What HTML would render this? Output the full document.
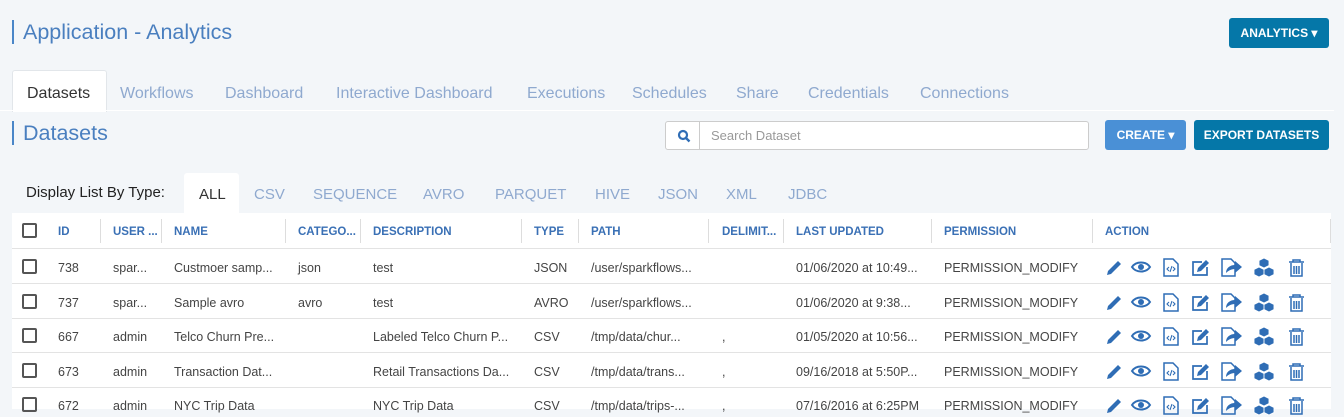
<!DOCTYPE html><html><head><style>
*{margin:0;padding:0;box-sizing:border-box}
body{width:1344px;height:409px;overflow:hidden;background:#f3f6f9;font-family:"Liberation Sans",sans-serif;position:relative;color:#444}
.a{position:absolute;white-space:nowrap}
.title{left:12px;top:20px;height:24px;border-left:2px solid #4a86c8;padding-left:9px;font-size:21.5px;color:#4a7fbf;line-height:24px}
.btn{color:#fff;font-weight:bold;font-size:12px;border-radius:3px;text-align:center}
.tab{top:85px;font-size:16px;color:#8fa9cf}
.ft{top:186px;font-size:15px;color:#8fa9cf}
.hd{font-size:11.5px;font-weight:bold;color:#3a70b5;top:226px}
.sep{width:1px;height:24px;background:#ddd;top:219px}
.cb{width:15px;height:15px;border:2px solid #555;border-radius:2px;left:22px}
.rl{left:12px;width:1319px;height:1px;background:#e3e3e3}
.c{font-size:12.5px;color:#444}
</style></head><body>
<div class="a title">Application - Analytics</div>
<div class="a btn" style="left:1229px;top:18px;width:100px;height:30px;line-height:30px;background:#0577a8">ANALYTICS ▾</div>
<div class="a" style="left:12px;top:70px;width:95px;height:42px;background:#fff;border:1px solid #e2e6ea;border-bottom:none;border-radius:3px 3px 0 0"></div>
<div class="a tab" style="left:27px;color:#333">Datasets</div>
<div class="a tab" style="left:120px">Workflows</div>
<div class="a tab" style="left:225px">Dashboard</div>
<div class="a tab" style="left:336px">Interactive Dashboard</div>
<div class="a tab" style="left:527px">Executions</div>
<div class="a tab" style="left:632px">Schedules</div>
<div class="a tab" style="left:736px">Share</div>
<div class="a tab" style="left:808px">Credentials</div>
<div class="a tab" style="left:920px">Connections</div>
<div class="a" style="left:0;top:110px;width:1334px;height:1px;background:#fff"></div>
<div class="a title" style="top:121px">Datasets</div>
<div class="a" style="left:665px;top:121px;width:424px;height:29px;background:#fff;border:1px solid #ccc;border-radius:3px"></div>
<div class="a" style="left:699px;top:122px;width:1px;height:27px;background:#ccc"></div>
<svg class="a" style="left:677px;top:129px" width="14" height="14" viewBox="0 0 14 14"><circle cx="6" cy="6" r="4" fill="none" stroke="#2f6db5" stroke-width="2.2"/><path d="M9 9l3.5 3.5" stroke="#2f6db5" stroke-width="2.4"/></svg>
<div class="a" style="left:711px;top:128px;font-size:13px;color:#999">Search Dataset</div>
<div class="a btn" style="left:1105px;top:120px;width:81px;height:30px;line-height:30px;background:#4a90d6">CREATE ▾</div>
<div class="a btn" style="left:1194px;top:120px;width:135px;height:30px;line-height:30px;background:#0577a8">EXPORT DATASETS</div>
<div class="a" style="left:26px;top:184px;font-size:15px;color:#222">Display List By Type:</div>
<div class="a" style="left:184px;top:173px;width:55px;height:41px;background:#fff;border-radius:3px 3px 0 0"></div>
<div class="a ft" style="left:199px;color:#333">ALL</div>
<div class="a ft" style="left:254px">CSV</div>
<div class="a ft" style="left:313px">SEQUENCE</div>
<div class="a ft" style="left:423px">AVRO</div>
<div class="a ft" style="left:495px">PARQUET</div>
<div class="a ft" style="left:595px">HIVE</div>
<div class="a ft" style="left:658px">JSON</div>
<div class="a ft" style="left:726px">XML</div>
<div class="a ft" style="left:788px">JDBC</div>
<div class="a" style="left:12px;top:213px;width:1319px;height:196px;background:#fff"></div>
<div class="a cb" style="top:223px"></div>
<div class="a hd" style="left:58px">ID</div><div class="a sep" style="left:100px"></div>
<div class="a hd" style="left:113px">USER ...</div><div class="a sep" style="left:161px"></div>
<div class="a hd" style="left:174px">NAME</div><div class="a sep" style="left:285px"></div>
<div class="a hd" style="left:298px">CATEGO...</div><div class="a sep" style="left:360px"></div>
<div class="a hd" style="left:373px">DESCRIPTION</div><div class="a sep" style="left:521px"></div>
<div class="a hd" style="left:534px">TYPE</div><div class="a sep" style="left:578px"></div>
<div class="a hd" style="left:591px">PATH</div><div class="a sep" style="left:708px"></div>
<div class="a hd" style="left:722px">DELIMIT...</div><div class="a sep" style="left:783px"></div>
<div class="a hd" style="left:796px">LAST UPDATED</div><div class="a sep" style="left:931px"></div>
<div class="a hd" style="left:944px">PERMISSION</div><div class="a sep" style="left:1092px"></div>
<div class="a hd" style="left:1105px">ACTION</div><div class="a sep" style="left:1330px"></div>
<div class="a rl" style="top:248px"></div>
<svg width="0" height="0" style="position:absolute"><defs>
<g id="ic" fill="#2f6db5" stroke="#2f6db5">
<path d="M2 18l1-4 10-10 3 3-10 10z" stroke="none"/>
<path d="M27 10c4-6 14-6 18 0-4 6-14 6-18 0z" fill="none" stroke-width="2"/><circle cx="36" cy="10" r="3" stroke="none"/>
<path d="M59 2h9l5 5v12h-14z" fill="none" stroke-width="1.5"/><path d="M64 10l-2 2 2 2M68 10l2 2-2 2M67 9l-2 6" fill="none" stroke-width="1.1"/>
<path d="M97 5h-9v13h14v-8" fill="none" stroke-width="1.7"/><path d="M92 15l1-4 8-8 3 3-8 8z" stroke="none"/>
<path d="M117 2h9l4 4v13h-13z" fill="none" stroke-width="1.5"/><path d="M121 16c0-5 4-8 9-8v-4l7 6-7 6v-4c-4 0-7 2-9 4z" stroke="none"/>
<path d="M159 1l5 2.5v5l-5 2.5-5-2.5v-5zM154 10l5 2.5v5l-5 2.5-5-2.5v-5zM164 10l5 2.5v5l-5 2.5-5-2.5v-5z" stroke="#fff" stroke-width="0.9"/>
<path d="M184 5h15M188 5v-2h7v2M186 6v13h11v-13M189 9v8M191.5 9v8M194 9v8" fill="none" stroke-width="1.5"/>
</g></defs></svg>
<div id="rows"></div>
<script>
var d=[["738","spar...","Custmoer samp...","json","test","JSON","/user/sparkflows...","","01/06/2020 at 10:49..."],
["737","spar...","Sample avro","avro","test","AVRO","/user/sparkflows...","","01/06/2020 at 9:38..."],
["667","admin","Telco Churn Pre...","","Labeled Telco Churn P...","CSV","/tmp/data/chur...",",","01/05/2020 at 10:56..."],
["673","admin","Transaction Dat...","","Retail Transactions Da...","CSV","/tmp/data/trans...",",","09/16/2018 at 5:50P..."],
["672","admin","NYC Trip Data","","NYC Trip Data","CSV","/tmp/data/trips-...",",","07/16/2016 at 6:25PM"]];
var xs=[58,113,174,298,373,534,591,722,796],h="";
d.forEach(function(r,i){var t=249+i*34.5;
h+='<div class="a cb" style="top:'+(t+10)+'px"></div>';
r.forEach(function(v,j){h+='<div class="a c" style="left:'+xs[j]+'px;top:'+(t+12)+'px">'+v+'</div>'});
h+='<div class="a c" style="left:944px;top:'+(t+12)+'px">PERMISSION_MODIFY</div>';
h+='<svg class="a" style="left:1105px;top:'+(t+8)+'px" width="205" height="22"><use href="#ic"/></svg>';
if(i<4)h+='<div class="a rl" style="top:'+(t+34)+'px"></div>';});
document.getElementById("rows").innerHTML=h;
</script>
</body></html>
